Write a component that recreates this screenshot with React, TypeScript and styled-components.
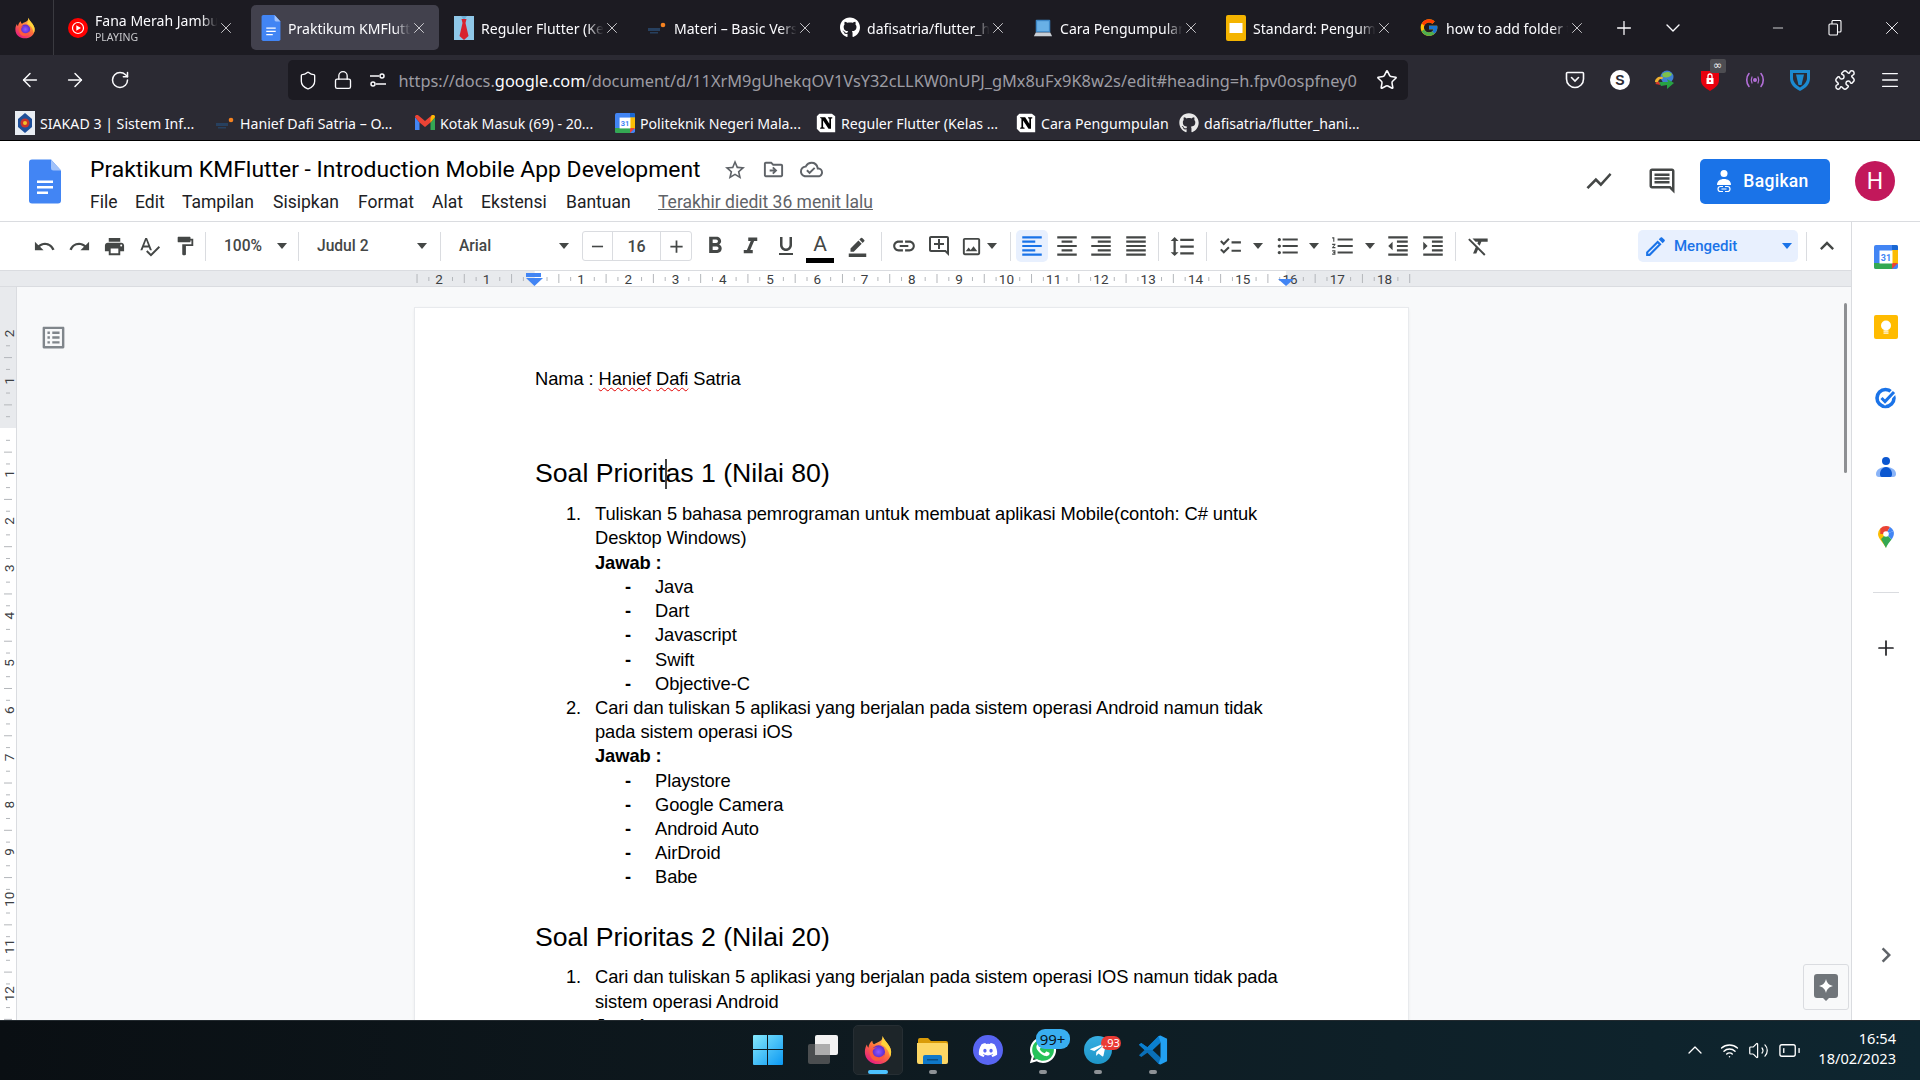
import React from "react";
import styled, { createGlobalStyle } from "styled-components";
import {
  ArrowLeft, ArrowRight, RotateCw, Shield, Lock, Star, Puzzle, Menu, X, Plus, ChevronDown,
  Minus, ChevronUp, Wifi, Volume2, BatteryLow,
} from "lucide-react";
import {
  MdUndo, MdRedo, MdPrint, MdSpellcheck, MdFormatPaint, MdFormatBold, MdFormatItalic, MdFormatUnderlined,
  MdBorderColor, MdLink, MdOutlineAddComment, MdOutlineImage, MdFormatAlignLeft, MdFormatAlignCenter,
  MdFormatAlignRight, MdFormatAlignJustify, MdFormatLineSpacing, MdChecklist, MdFormatListBulleted,
  MdFormatListNumbered, MdFormatIndentDecrease, MdFormatIndentIncrease, MdFormatClear, MdOutlineEdit,
  MdKeyboardArrowUp, MdChevronRight, MdStarBorder, MdOutlineDriveFileMove, MdOutlineCloudDone,
  MdShowChart, MdOutlineComment, MdAdd, MdRemove, MdOutlineListAlt,
} from "react-icons/md";
import { FaGithub, FaDiscord, FaWhatsapp, FaTelegramPlane } from "react-icons/fa";
import { FcGoogle } from "react-icons/fc";

const uiFont = `"Noto Sans", "Open Sans", sans-serif`;
const docsFont = `Roboto, "Liberation Sans", sans-serif`;

const GlobalStyle = createGlobalStyle`
  html, body { margin: 0; padding: 0; background: #fff; overflow: hidden; }
  * { box-sizing: border-box; }
`;

const Root = styled.div`
  width: 1920px; height: 1080px; display: flex; flex-direction: column; overflow: hidden;
  font-family: ${uiFont};
`;

/* ---------- browser chrome ---------- */
const TabStrip = styled.div`
  height: 55px; background: #1c1b22; display: flex; align-items: center; color: #fbfbfe; flex: none;
`;
const FirefoxCell = styled.div`
  width: 54px; height: 55px; border-right: 1px solid #3a3a40; display: flex; align-items: center;
  justify-content: center; margin-right: 4px; padding-right: 3px;
`;
const Tab = styled.div<{ $active?: boolean }>`
  width: 188px; height: 45px; margin-right: 5px; padding-left: 10px; display: flex; align-items: center;
  border-radius: 5px; flex: none; background: ${(p) => (p.$active ? "#42414d" : "transparent")};
`;
const TabIcon = styled.span`
  width: 20px; height: 24px; flex: none; display: flex; align-items: center; justify-content: center;
`;
const TabText = styled.div<{ $single: boolean }>`
  width: 125px; margin-left: 7px; flex: none; overflow: hidden; white-space: nowrap; font-size: 14.05px; line-height: 19px;
  padding-top: ${(p) => (p.$single ? 2 : 0)}px;
  -webkit-mask-image: linear-gradient(90deg, #000 85%, transparent 98%);
  mask-image: linear-gradient(90deg, #000 85%, transparent 98%);
`;
const TabSub = styled.div`
  font-size: 10.5px; line-height: 14px; color: #c8c8cc;
`;
const TabClose = styled.span`
  margin-left: -3px; line-height: 0; color: #e8e8ea; flex: none;
`;
const StripButton = styled.div<{ $w: number }>`
  width: ${(p) => p.$w}px; height: 45px; display: flex; align-items: center; justify-content: center; flex: none;
`;
const WindowControls = styled.div`
  margin-left: auto; display: flex;
`;
const NavBar = styled.div`
  height: 50px; background: #2b2a33; display: flex; align-items: center; padding-left: 7.5px; color: #fbfbfe; flex: none;
`;
const NavButton = styled.div`
  width: 45px; height: 40px; display: flex; align-items: center; justify-content: center; flex: none;
`;
const UrlBox = styled.div`
  width: 1120px; height: 40px; margin-left: 145.5px; background: #1c1b22; border-radius: 5px; display: flex;
  align-items: center; padding-left: 10px; flex: none; color: #fbfbfe;
`;
const UrlIcon = styled.span<{ $w: number }>`
  width: ${(p) => p.$w}px; display: flex; justify-content: center; flex: none;
`;
const UrlText = styled.div`
  margin-left: 10.5px; padding-top: 2px; font-size: 16.35px; color: #9c9ca3; white-space: nowrap; width: 977px; overflow: hidden;
`;
const UrlHost = styled.span`
  color: #fbfbfe;
`;
const ExtRow = styled.div`
  margin-left: 144.5px; display: flex;
`;
const ExtSlot = styled.div`
  width: 45px; height: 40px; display: flex; align-items: center; justify-content: center; position: relative; flex: none;
`;
const InfinityTag = styled.span`
  position: absolute; left: 22px; top: -1px; width: 16px; height: 14px; background: #4d4d52; border-radius: 2px;
  color: #f2f2f2; font: 11px/13px "DejaVu Sans", sans-serif; text-align: center;
`;
const BookmarkBar = styled.div`
  height: 35px; background: #2b2a33; display: flex; align-items: center; padding-left: 15px; color: #fbfbfe; flex: none;
`;
const Bookmark = styled.div<{ $w: number }>`
  width: ${(p) => p.$w}px; display: flex; align-items: center; gap: 5px; font-size: 14.15px; white-space: nowrap; flex: none;
`;
const BookmarkLabel = styled.span`
  padding-top: 2px;
`;
const FavSlot = styled.span`
  width: 20px; height: 22px; display: flex; align-items: center; justify-content: center; flex: none;
`;

/* ---------- docs header ---------- */
const DocsHeader = styled.div`
  height: 82px; background: #fff; border-top: 1px solid #000; border-bottom: 1px solid #dadce0; padding-left: 29px;
  display: flex; flex: none; font-family: ${docsFont};
`;
const LogoCell = styled.div`
  width: 32px; margin-right: 29px; padding-top: 18px; flex: none;
`;
const TitleColumn = styled.div`
  padding-top: 12px;
`;
const TitleRow = styled.div`
  height: 33px; display: flex; align-items: center;
`;
const DocTitle = styled.div`
  font-size: 22.9px; color: #000; white-space: nowrap; width: 626px;
`;
const TitleAction = styled.span<{ $w: number }>`
  width: ${(p) => p.$w}px; display: flex; justify-content: center; color: #5f6368; flex: none;
`;
const MenuRow = styled.div`
  height: 32px; display: flex; align-items: center; font-size: 17.5px; color: #202124; white-space: nowrap;
`;
const MenuItem = styled.span<{ $x: number }>`
  width: ${(p) => p.$x}px; flex: none;
`;
const LastEdit = styled.span`
  color: #5f6368; text-decoration: underline; font-size: 17.5px;
`;
const HeaderRight = styled.div`
  margin-left: auto; display: flex; align-items: center; padding-right: 25px;
`;
const HeaderIcon = styled.div<{ $ml?: number }>`
  width: 45px; height: 45px; margin-left: ${(p) => p.$ml ?? 0}px; display: flex; align-items: center; justify-content: center;
  color: #444746; flex: none;
`;
const ShareButton = styled.div`
  width: 130px; height: 45px; margin-left: 15.5px; padding-right: 7px; background: #1a73e8; border-radius: 5px; color: #fff; display: flex;
  align-items: center; justify-content: center; gap: 9px; font-size: 17.5px; font-weight: 500; letter-spacing: .3px;
`;
const Avatar = styled.div`
  width: 40px; height: 40px; margin-left: 25px; border-radius: 50%; background: #c2185b; color: #fff; font-size: 23px;
  display: flex; align-items: center; justify-content: center;
`;

/* ---------- workspace ---------- */
const Workspace = styled.div`
  flex: 1; display: flex; min-height: 0; font-family: ${docsFont};
`;
const EditorColumn = styled.div`
  flex: 1; min-width: 0; display: flex; flex-direction: column;
`;
const Toolbar = styled.div`
  height: 48px; background: #fff; display: flex; align-items: center; padding: 0 6.5px 0 27px; flex: none; color: #444746;
`;
const ToolButton = styled.div<{ $w?: number; $ml?: number; $on?: boolean }>`
  width: ${(p) => p.$w ?? 35}px; height: 32px; margin-left: ${(p) => p.$ml ?? 0}px; display: flex; align-items: center;
  justify-content: center; flex: none; border-radius: 5px; background: ${(p) => (p.$on ? "#e8f0fe" : "transparent")};
  color: ${(p) => (p.$on ? "#1a73e8" : "#444746")}; position: relative;
`;
const ImageButton = styled.div`
  width: 50px; height: 32px; padding-right: 6px; display: flex; align-items: center; justify-content: center; gap: 3.5px; flex: none; color: #444746;
`;
const ToolSep = styled.div<{ $ml: number; $mr: number }>`
  width: 1px; height: 29px; background: #dadce0; margin: 0 ${(p) => p.$mr}px 0 ${(p) => p.$ml}px; flex: none;
`;
const Caret = styled.span<{ $color?: string }>`
  width: 0; height: 0; flex: none; border-left: 5px solid transparent; border-right: 5px solid transparent;
  border-top: 6px solid ${(p) => p.$color ?? "#444746"};
`;
const Select = styled.div<{ $w: number; $pr: number; $ml?: number }>`
  width: ${(p) => p.$w}px; height: 32px; margin-left: ${(p) => p.$ml ?? 0}px; padding: 0 ${(p) => p.$pr}px 0 15px; display: flex;
  align-items: center; justify-content: space-between; flex: none; font-size: 15.6px; font-weight: 500; color: #444746;
`;
const SizeBox = styled.div`
  width: 110px; height: 30px; margin-left: 4px; border: 1px solid #dadce0; border-radius: 3px; display: grid;
  grid-template-columns: 29px 49px 30px; flex: none; align-items: center; justify-items: center; font-size: 16px; font-weight: 500; color: #444746;
`;
const SizeValue = styled.div`
  width: 100%; height: 100%; border-left: 1px solid #dadce0; border-right: 1px solid #dadce0; display: flex; align-items: center; justify-content: center;
`;
const ColorBar = styled.span`
  position: absolute; left: 3.5px; bottom: -1px; width: 28px; height: 5px; background: #000;
`;
const ModeButton = styled.div`
  width: 160px; height: 32px; margin-left: auto; background: #e8f0fe; border-radius: 5px; display: flex; align-items: center;
  color: #1a73e8; padding: 0 6px 0 5px; font-size: 15px; font-weight: 500; flex: none;
`;
const ModeLabel = styled.span`
  margin-left: 6px; flex: 1;
`;
const RulerBar = styled.div`
  height: 17px; background: #e8eaed; border-top: 1px solid #dadce0; border-bottom: 1px solid #dadce0; flex: none; overflow: hidden;
`;
const RulerSvg = styled.svg`
  display: block;
`;
const EditorBody = styled.div`
  flex: 1; min-height: 0; display: flex; overflow: hidden;
`;
const SideRuler = styled.div`
  width: 17px; background: #fff; border-right: 1px solid #dadce0; flex: none; overflow: hidden;
`;
const Canvas = styled.div`
  flex: 1; min-width: 0; background: #f8f9fa; position: relative; padding: 21px 0 0 398px; overflow: hidden;
`;
const OutlineToggle = styled.div`
  position: absolute; left: 22px; top: 36px; color: #80868b; line-height: 0;
`;
const ScrollThumb = styled.div`
  position: absolute; right: 4px; top: 16px; width: 3px; height: 170px; background: #8e9093; border-radius: 2px;
`;
const ExploreButton = styled.div`
  position: absolute; right: 2px; bottom: 10px; width: 46px; height: 46px; background: #f8f9fa; border: 1px solid #dadce0;
  border-radius: 3px; display: flex; align-items: center; justify-content: center;
`;
const Page = styled.div`
  width: 993px; min-height: 900px; background: #fff; box-shadow: 0 0 0 1px #e8eaed, 0 1px 3px rgba(60,64,67,.15);
  padding: 59px 120px 0; font: 18.33px/24.2px "Liberation Sans", Arial, sans-serif; letter-spacing: -0.085px; color: #000;
`;
const Para = styled.div`
  white-space: pre;
`;
const Squiggle = styled.span`
  text-decoration: underline wavy #e00000 1px; text-underline-offset: 2px;
`;
const Heading = styled.h2<{ $mt: number }>`
  font: 400 26.67px/35.2px "Liberation Sans", Arial, sans-serif; letter-spacing: 0; margin: ${(p) => p.$mt}px 0 10.7px;
`;
const Caretline = styled.span`
  display: inline-block; position: relative; width: 0; height: 0;
`;
const CaretBar = styled.span`
  position: absolute; left: 0; top: -23px; width: 1.5px; height: 30px; background: #444;
`;
const NumRow = styled.div`
  display: flex; padding-left: 31px;
`;
const NumMark = styled.div`
  width: 29px; flex: none;
`;
const NumBody = styled.div`
  flex: 1;
`;
const Bold = styled.div`
  font-weight: 700;
`;
const DashRow = styled.div`
  display: flex; padding-left: 30px;
`;
const DashMark = styled.div`
  width: 30px; flex: none; font-weight: 700;
`;
const SidePanel = styled.div`
  width: 69px; background: #fff; border-left: 1px solid #dadce0; flex: none; display: flex; flex-direction: column; align-items: center;
`;
const SideApp = styled.div`
  height: 70px; width: 100%; display: flex; align-items: center; justify-content: center; flex: none;
`;
const SideDivider = styled.div`
  width: 26px; height: 1px; background: #dadce0; margin: 20px 0 20px; flex: none;
`;
const SideFoot = styled.div`
  margin-top: auto; padding-bottom: 50px; color: #5f6368; line-height: 0;
`;

/* ---------- taskbar ---------- */
const Taskbar = styled.div`
  height: 60px; flex: none; background: linear-gradient(90deg, #0a0f13 0%, #0e1a20 45%, #0e2630 100%);
  border-top: 1px solid #232a2f; display: flex; align-items: center; padding: 0 0 1px 742.5px; color: #fff;
`;
const TaskApps = styled.div`
  display: flex; gap: 5px;
`;
const TaskSlot = styled.div<{ $active?: boolean }>`
  width: 50px; height: 50px; display: flex; align-items: center; justify-content: center; position: relative; border-radius: 5px;
  background: ${(p) => (p.$active ? "#1d2529" : "transparent")};
  border: 1px solid ${(p) => (p.$active ? "#262e33" : "transparent")};
`;
const RunDot = styled.span<{ $active?: boolean }>`
  position: absolute; bottom: 0px; left: 50%; transform: translateX(-50%); height: 4px; border-radius: 2px;
  width: ${(p) => (p.$active ? 20 : 8)}px; background: ${(p) => (p.$active ? "#4cc2ff" : "#8d9296")};
`;
const CountBadge = styled.span<{ $bg: string; $l: number; $t: number; $w: number; $h: number; $fs: number; $c: string }>`
  position: absolute; left: ${(p) => p.$l}px; top: ${(p) => p.$t}px; width: ${(p) => p.$w}px; height: ${(p) => p.$h}px;
  background: ${(p) => p.$bg}; color: ${(p) => p.$c}; border-radius: 9px; font: ${(p) => p.$fs}px/${(p) => p.$h}px ${uiFont};
  text-align: center;
`;
const Tray = styled.div`
  margin-left: auto; display: flex; align-items: center; padding-right: 24px;
`;
const TrayIcon = styled.span<{ $w: number }>`
  width: ${(p) => p.$w}px; display: flex; justify-content: center; flex: none;
`;
const Clock = styled.div`
  margin-left: 11px; padding-bottom: 4px; text-align: right; font-size: 14.6px; line-height: 20px; color: #fff;
`;
const StackedIcon = styled.span`
  position: relative; width: 30px; height: 30px; display: block;
`;
const WaDisc = styled.span`
  position: absolute; left: 3px; top: 3px; width: 24px; height: 24px; border-radius: 50%; background: #25c25a;
`;
const WaGlyph = styled.span`
  position: absolute; left: 0; top: 0; line-height: 0;
`;
const DiscordDisc = styled.span`
  width: 30px; height: 30px; border-radius: 50%; background: #5865f2; display: flex; align-items: center; justify-content: center;
`;
const TelegramDisc = styled.span`
  width: 28px; height: 28px; border-radius: 50%; background: linear-gradient(180deg, #37aee2, #1e96c8); display: flex; align-items: center; justify-content: center;
`;

/* ---------- drawings ---------- */
const Firefox = ({ s = 24, id }: { s?: number; id: string }) => (
  <svg width={s} height={s} viewBox="0 0 32 32">
    <defs>
      <linearGradient id={`${id}A`} x1="0.8" y1="0.1" x2="0.2" y2="1">
        <stop offset="0" stopColor="#ffbd4f" /><stop offset=".45" stopColor="#ff7139" /><stop offset="1" stopColor="#e31587" />
      </linearGradient>
      <radialGradient id={`${id}B`}><stop offset="0" stopColor="#9059ff" /><stop offset="1" stopColor="#592acb" /></radialGradient>
    </defs>
    <path d="M21 1c.6 3 3 5 5.500 8.500C29 13 30 15.500 30 18c0 7.700-6.300 13-14 13S2 25.700 2 18c0-3 .8-5.600 2.200-7.800.2 1.600.8 2.600 1.600 3.400C6 10 8 7 10 6c-.2 1.600.5 3 1.800 3.800C14 8 18 7 19.500 5.500 20.500 4.300 21 2.800 21 1z" fill={`url(#${id}A)`} />
    <path d="M21 1c.6 3 3 5 5.500 8.500C29 13 30 15.500 30 18c0 2-.4 3.800-1.200 5.400C28 17 24 12 19 9.800c1-1.200 2-5.300 2-8.800z" fill="#ffd43a" />
    <circle cx="16.500" cy="18" r="7" fill={`url(#${id}B)`} />
    <path d="M7 17c2-3 5-4 8-3.500-4 .5-5 3-4.500 5.500.5 3 3.500 5 7 4.600 3.500-.4 5-2.400 5.500-4.600 0 5-4 8.500-8.500 8.500S7 23 7 17z" fill="#ff5a3c" />
  </svg>
);
const DocsGlyph = ({ w, h }: { w: number; h: number }) => (
  <svg width={w} height={h} viewBox="0 0 32 44">
    <path d="M3 0h19l10 11v30a3 3 0 0 1-3 3H3a3 3 0 0 1-3-3V3a3 3 0 0 1 3-3z" fill="#4285f4" />
    <path d="M22 0l10 11H24.500a2.500 2.500 0 0 1-2.500-2.500z" fill="#a1c2fa" />
    <path d="M8 21h16v2.400H8zM8 26.500h16v2.400H8zM8 32h11v2.400H8z" fill="#fff" />
  </svg>
);
const YtMusic = () => (
  <svg width="20" height="20" viewBox="0 0 20 20">
    <circle cx="10" cy="10" r="10" fill="#f00" />
    <circle cx="10" cy="10" r="5.500" fill="none" stroke="#fff" strokeWidth="1.200" />
    <path d="M8.300 7.300 13 10l-4.700 2.700z" fill="#fff" />
  </svg>
);
const TieIcon = () => (
  <svg width="20" height="24" viewBox="0 0 20 24">
    <rect width="20" height="24" fill="#6aaed6" />
    <path d="M0 0h7l3 4 3-4h7v24H0z" fill="#8fc7e8" />
    <path d="M7.500 3h5l-1 4 3 13-4.500 4-4.500-4 3-13z" fill="#d8232f" />
  </svg>
);
const OrbitIcon = () => (
  <svg width="20" height="16" viewBox="0 0 20 16">
    <rect x="1" y="8" width="12" height="3" fill="#27405f" />
    <rect x="3" y="12" width="8" height="1.500" fill="#27405f" />
    <circle cx="16" cy="5" r="2.300" fill="#f58220" />
  </svg>
);
const LaptopIcon = () => (
  <svg width="22" height="22" viewBox="0 0 22 22">
    <rect x="3" y="2" width="16" height="14" rx="1" fill="#3d87c7" />
    <rect x="4.500" y="3.500" width="13" height="11" fill="#69b0e6" />
    <path d="M3 16h16l2 4H1z" fill="#c9ced4" />
  </svg>
);
const SlidesIcon = () => (
  <svg width="20" height="26" viewBox="0 0 20 26">
    <rect width="20" height="26" rx="2" fill="#f4b400" />
    <rect x="3.500" y="8" width="13" height="10" fill="#fff" />
  </svg>
);
const GmailIcon = () => (
  <svg width="20" height="16" viewBox="0 0 20 16">
    <path d="M0 2v13h4.500V7.500z" fill="#4285f4" />
    <path d="M20 2v13h-4.500V7.500z" fill="#34a853" />
    <path d="M0 2c0-2 2.200-2.500 3.500-1.500L10 6l6.500-5.500C17.800-.5 20 0 20 2l-4.500 5.500L10 12 4.500 7.500z" fill="#ea4335" />
    <path d="M15.500 3.600 16.500.5C17.800-.5 20 0 20 2l-4.500 5.500z" fill="#fbbc04" />
  </svg>
);
const CalendarIcon = ({ s }: { s: number }) => (
  <svg width={s} height={s} viewBox="0 0 24 24">
    <rect width="24" height="24" rx="2" fill="#4285f4" />
    <rect x="18" y="5" width="6" height="14" fill="#fbbc04" />
    <path d="M0 18h18v6H2a2 2 0 0 1-2-2z" fill="#34a853" />
    <path d="M18 18h6l-6 6z" fill="#ea4335" />
    <path d="M18 0h4a2 2 0 0 1 2 2v3h-6z" fill="#1967d2" />
    <rect x="5.500" y="5.500" width="13" height="13" fill="#fff" />
    <text x="12" y="16" textAnchor="middle" fontSize="9" fontWeight="700" fontFamily="Roboto" fill="#4285f4">31</text>
  </svg>
);
const NotionIcon = () => (
  <svg width="20" height="20" viewBox="0 0 24 24">
    <path d="M4 1h15l4 3v19H5l-4-4V4z" fill="#fff" />
    <path d="M7 5h4l5 8V7l-1.500-.6V5h5v1.400L18 7v12h-3L8.500 9v8l1.800.6V19H5v-1.400l1.500-.6V6.500L5 6V5z" fill="#000" />
  </svg>
);
const SiakadIcon = () => (
  <svg width="20" height="24" viewBox="0 0 20 24">
    <rect width="20" height="24" fill="#e9edf3" />
    <path d="M10 2l7 6v8l-7 6-7-6V8z" fill="#1f4f99" />
    <circle cx="10" cy="12" r="4.500" fill="#c9342c" />
    <circle cx="10" cy="12" r="2" fill="#f0c030" />
  </svg>
);
const PermIcon = () => (
  <svg width="20" height="18" viewBox="0 0 20 18" fill="none" stroke="#fbfbfe" strokeWidth="1.500">
    <circle cx="14" cy="5" r="2" /><path d="M2 5h9" />
    <circle cx="5" cy="13" r="2" /><path d="M8 13h10" />
  </svg>
);
const PocketIcon = () => (
  <svg width="20" height="20" viewBox="0 0 20 20" fill="none" stroke="#fbfbfe" strokeWidth="1.600">
    <path d="M2.500 2.500h15a1 1 0 0 1 1 1V9a8.500 8.500 0 0 1-17 0V3.500a1 1 0 0 1 1-1z" />
    <path d="M6.500 7.500 10 11l3.500-3.500" strokeLinecap="round" />
  </svg>
);
const SkypeS = () => (
  <svg width="20" height="20" viewBox="0 0 20 20">
    <circle cx="10" cy="10" r="10" fill="#fff" />
    <text x="10" y="15" textAnchor="middle" fontSize="14" fontWeight="700" fontFamily="Liberation Sans" fill="#2b2a33">S</text>
  </svg>
);
const IdmIcon = () => (
  <svg width="22" height="22" viewBox="0 0 22 22">
    <circle cx="13" cy="8" r="6.500" fill="#3f7fd0" />
    <path d="M8 5c3-2 7-3 10 0-1 3-5 4-9 3z" fill="#7fc04a" />
    <path d="M1 13c0-4 4-6 7-5 2 .5 1 2-1 2-2 0-3 2-3 4z" fill="#f0b030" />
    <path d="M1.500 15c0-1 2-3 4-2l1 3z" fill="#d8352c" />
    <path d="M5 13h9l-1-3 7 4-7 6v-4l-6 1z" fill="#27a243" />
  </svg>
);
const RedShield = () => (
  <svg width="18" height="22" viewBox="0 0 18 22">
    <path d="M0 2h18v9c0 5-4 8-9 11C4 19 0 16 0 11z" fill="#e8000d" />
    <rect x="5.500" y="9" width="7" height="6" fill="#fff" />
    <path d="M7 9V7a2 2 0 0 1 4 0v2" fill="none" stroke="#fff" strokeWidth="1.300" />
    <rect x="8.300" y="11" width="1.400" height="2" fill="#e8000d" />
  </svg>
);
const RadioIcon = () => (
  <svg width="20" height="16" viewBox="0 0 20 16" fill="none" stroke="#b36fd8" strokeWidth="1.600" strokeLinecap="round">
    <path d="M4 1.500C1 5 1 11 4 14.500M16 1.500c3 3.500 3 9.500 0 13" />
    <path d="M7 5c-1 2-1 4 0 6M13 5c1 2 1 4 0 6" strokeWidth="1.200" />
    <circle cx="10" cy="8" r="1.200" fill="#b36fd8" />
  </svg>
);
const ZenShield = () => (
  <svg width="20" height="22" viewBox="0 0 20 22">
    <path d="M0 1h20v8c0 6-4 10-10 13C4 19 0 15 0 9z" fill="#1c8ad0" />
    <path d="M3 4h14v5c0 4-3 7-7 9.500C6 16 3 13 3 9z" fill="#2b2a33" />
    <path d="M6 5.500h8L11.500 16h-3z" fill="#1c8ad0" />
  </svg>
);
const RestoreIcon = () => (
  <svg width="14" height="16" viewBox="0 0 14 16" fill="none" stroke="#fbfbfe" strokeWidth="1.100">
    <rect x="1" y="4" width="8.500" height="11" rx="1" />
    <path d="M4 4V1.500a1 1 0 0 1 1-1h7a1 1 0 0 1 1 1V11a1 1 0 0 1-1 1H9.500" />
  </svg>
);
const BagikanIcon = () => (
  <svg width="20" height="24" viewBox="0 0 20 24" fill="#fff">
    <circle cx="10" cy="4.500" r="3.500" />
    <path d="M3 16c0-4 3-6 7-6s7 2 7 6z" />
    <path d="M4 20a2.500 2.500 0 0 1 2.500-2.500H9M16 20a2.500 2.500 0 0 0-2.500-2.500H11M4 20a2.500 2.500 0 0 0 2.500 2.500H9M16 20a2.500 2.500 0 0 1-2.500 2.500H11M7.500 20h5" fill="none" stroke="#fff" strokeWidth="1.200" />
  </svg>
);
const KeepIcon = () => (
  <svg width="24" height="24" viewBox="0 0 24 24">
    <rect width="24" height="24" rx="2" fill="#ffbb00" />
    <circle cx="12" cy="10.500" r="5" fill="#fff" />
    <rect x="9.500" y="15.500" width="5" height="1.200" fill="#fff" />
    <rect x="9.500" y="17.500" width="5" height="1.200" fill="#fff" />
  </svg>
);
const TasksIcon = () => (
  <svg width="24" height="24" viewBox="0 0 24 24">
    <circle cx="11.500" cy="13" r="8.500" fill="none" stroke="#1a73e8" strokeWidth="3.600" />
    <path d="M7.500 13l3.500 3.500L21 6" fill="none" stroke="#fff" strokeWidth="6" />
    <path d="M7.500 13l3.500 3.500L20 7" fill="none" stroke="#1a73e8" strokeWidth="3" />
  </svg>
);
const ContactsIcon = () => (
  <svg width="20" height="22" viewBox="0 0 20 22">
    <circle cx="10" cy="5" r="4" fill="#0b57d0" />
    <path d="M0 18c0-4 4-7 10-7s10 3 10 7c0 2-1 3-3 3H3c-2 0-3-1-3-3z" fill="#8ab4f8" />
    <path d="M4 18c0-4 3-7 6-7s6 3 6 7c0 2-.5 3-2 3H6c-1.500 0-2-1-2-3z" fill="#0b57d0" />
  </svg>
);
const MapsIcon = () => (
  <svg width="16" height="22" viewBox="0 0 16 22">
    <path d="M8 22C6 17 0 13 0 8a8 8 0 0 1 2.300-5.600L8 8z" fill="#fbbc04" />
    <path d="M2.300 2.400A8 8 0 0 1 8 0a8 8 0 0 1 4 1L8 8 2.300 8z" fill="#ea4335" />
    <path d="M12 1a8 8 0 0 1 3.500 4L8 8z" fill="#4285f4" />
    <path d="M15.500 5c1 3.500 0 6-2 8.500L8 8z" fill="#4285f4" />
    <path d="M13.500 13.500C11.500 16 9 19 8 22L3 13l5-5z" fill="#34a853" />
    <circle cx="8" cy="8" r="2.800" fill="#fff" />
  </svg>
);
const ExploreGlyph = () => (
  <svg width="24" height="27" viewBox="0 0 24 27">
    <path d="M3 0h18a3 3 0 0 1 3 3v18a3 3 0 0 1-3 3h-6l-3 3-3-3H3a3 3 0 0 1-3-3V3a3 3 0 0 1 3-3z" fill="#70757a" />
    <path d="M12 5c1 4 3 6 7 7-4 1-6 3-7 7-1-4-3-6-7-7 4-1 6-3 7-7z" fill="#fff" />
  </svg>
);
const WindowsLogo = () => (
  <svg width="30" height="30" viewBox="0 0 30 30">
    <defs>
      <linearGradient id="win" x1="0" y1="0" x2="1" y2="1"><stop offset="0" stopColor="#86e9fd" /><stop offset="1" stopColor="#0b98f2" /></linearGradient>
    </defs>
    <path d="M0 1a1 1 0 0 1 1-1h13v14H0zM15 0h14a1 1 0 0 1 1 1v13H15zM0 15h14v15H1a1 1 0 0 1-1-1zM15 15h15v14a1 1 0 0 1-1 1H15z" fill="url(#win)" />
  </svg>
);
const TaskView = () => (
  <svg width="30" height="30" viewBox="0 0 30 30">
    <rect x="0" y="9" width="22" height="20" rx="2" fill="#4b4e50" />
    <rect x="7" y="0" width="23" height="20" rx="2" fill="#f2f2f2" />
    <rect x="7" y="9" width="15" height="11" fill="#adadad" />
  </svg>
);
const FilesIcon = () => (
  <svg width="31" height="28" viewBox="0 0 31 28">
    <path d="M1 4a2 2 0 0 1 2-2h8l3 3h15a2 2 0 0 1 2 2v4H1z" fill="#d99b08" />
    <path d="M0 7h29a2 2 0 0 1 2 2v17a2 2 0 0 1-2 2H2a2 2 0 0 1-2-2z" fill="#fcd664" />
    <path d="M6 28V21a2 2 0 0 1 2-2h15a2 2 0 0 1 2 2v7z" fill="#0f78c9" />
    <rect x="10" y="23" width="11" height="1.500" fill="#0a4f85" />
  </svg>
);
const VsCode = () => (
  <svg width="30" height="32" viewBox="0 0 32 32">
    <path d="M1 10.500 3.500 8.500 10 13 22 1 24 1V8L15.500 16 24 24V31H22L10 19 3.500 23.500 1 21.500 7 16Z" fill="#0a6fb8" />
    <path d="M22 1 10 13 3.500 8.500 1 10.500 7 16 15.500 16 24 8V1z" fill="#0a7fd0" />
    <path d="M24 .5 31 4V28L24 31.500 22 31 24 24V8L22 1Z" fill="#22a0f2" />
  </svg>
);

/* ---------- rulers ---------- */
const CM = 47.27;
const ZERO_X = 534.7;
const ZERO_Y = 141;
const quarter = [0.25, 0.5, 0.75];

const HorizontalRuler = () => {
  const marks: React.ReactNode[] = [];
  for (let i = -3; i <= 18; i++) {
    const base = ZERO_X + i * CM;
    if (i !== 0 && i >= -2) {
      marks.push(
        <text key={`n${i}`} x={base - 1} y={13} textAnchor="middle" fontSize="13.5" fontFamily="Roboto" fill="#3c4043">
          {Math.abs(i)}
        </text>,
      );
    }
    quarter.forEach((q) => {
      const x = base + q * CM;
      if (x < 414 || x > 1410) return;
      const long = q === 0.5;
      marks.push(<rect key={`t${i}${q}`} x={x} y={long ? 3 : 6} width="1" height={long ? 9 : 4} fill="#b4b7bb" />);
    });
  }
  return (
    <RulerSvg width="1851" height="15" viewBox="0 0 1851 15">
      <rect x="534.7" width="751.300" height="15" fill="#fff" />
      {marks}
      <rect x="526" y="2" width="15" height="4" fill="#4285f4" />
      <path d="M526 7h17l-8.500 8z" fill="#4285f4" />
      <path d="M1278 8h16l-8 7z" fill="#4285f4" />
    </RulerSvg>
  );
};

const VerticalRuler = () => {
  const marks: React.ReactNode[] = [];
  for (let i = -2; i <= 15; i++) {
    const base = ZERO_Y + i * CM;
    if (i !== 0) {
      marks.push(
        <text key={`n${i}`} transform={`translate(13.500 ${base - (i > 0 ? 1.5 : 0)}) rotate(-90)`} textAnchor="middle" fontSize="13.5" fontFamily="Roboto" fill="#3c4043">
          {Math.abs(i)}
        </text>,
      );
    }
    quarter.forEach((q) => {
      const y = base + q * CM;
      const long = q === 0.5;
      marks.push(<rect key={`t${i}${q}`} x={long ? 4 : 6} y={y} width={long ? 8 : 4} height="1" fill="#b4b7bb" />);
    });
  }
  return (
    <RulerSvg width="16" height="733" viewBox="0 0 16 733">
      <rect width="16" height="141" fill="#e8eaed" />
      {marks}
    </RulerSvg>
  );
};

/* ---------- data ---------- */
const tabs: { icon: React.ReactNode; title: string; sub?: string; active?: boolean }[] = [
  { icon: <YtMusic />, title: "Fana Merah Jambu", sub: "PLAYING" },
  { icon: <DocsGlyph w={20} h={26} />, title: "Praktikum KMFlutter", active: true },
  { icon: <TieIcon />, title: "Reguler Flutter (Kelas" },
  { icon: <OrbitIcon />, title: "Materi – Basic Version" },
  { icon: <FaGithub size={21} color="#fff" />, title: "dafisatria/flutter_hanief" },
  { icon: <LaptopIcon />, title: "Cara Pengumpulan" },
  { icon: <SlidesIcon />, title: "Standard: Pengumpulan" },
  { icon: <FcGoogle size={21} />, title: "how to add folder to" },
];

const bookmarks: { icon: React.ReactNode; label: string; w: number }[] = [
  { icon: <SiakadIcon />, label: "SIAKAD 3 | Sistem Inf...", w: 200 },
  { icon: <OrbitIcon />, label: "Hanief Dafi Satria – O...", w: 200 },
  { icon: <GmailIcon />, label: "Kotak Masuk (69) - 20...", w: 200 },
  { icon: <CalendarIcon s={20} />, label: "Politeknik Negeri Mala...", w: 201 },
  { icon: <NotionIcon />, label: "Reguler Flutter (Kelas ...", w: 200 },
  { icon: <NotionIcon />, label: "Cara Pengumpulan", w: 163 },
  { icon: <FaGithub size={20} color="#e8e8e8" />, label: "dafisatria/flutter_hani...", w: 200 },
];

const menus: [string, number][] = [
  ["File", 45], ["Edit", 47], ["Tampilan", 91], ["Sisipkan", 85], ["Format", 74], ["Alat", 49], ["Ekstensi", 85], ["Bantuan", 92],
];

const extensions = [<PocketIcon key="p" />, <SkypeS key="s" />, <IdmIcon key="i" />, <RedShield key="r" />, <RadioIcon key="a" />, <ZenShield key="z" />];

const prioritas1 = [
  {
    q: "Tuliskan 5 bahasa pemrograman untuk membuat aplikasi Mobile(contoh: C# untuk Desktop Windows)",
    a: ["Java", "Dart", "Javascript", "Swift", "Objective-C"],
  },
  {
    q: "Cari dan tuliskan 5 aplikasi yang berjalan pada sistem operasi Android namun tidak pada sistem operasi iOS",
    a: ["Playstore", "Google Camera", "Android Auto", "AirDroid", "Babe"],
  },
];

const App = () => (
  <Root>
    <GlobalStyle />
    <TabStrip>
      <FirefoxCell><Firefox s={22} id="ffTop" /></FirefoxCell>
      {tabs.map((t) => (
        <Tab key={t.title} $active={t.active}>
          <TabIcon>{t.icon}</TabIcon>
          <TabText $single={!t.sub}>
            {t.title}
            {t.sub && <TabSub>{t.sub}</TabSub>}
          </TabText>
          <TabClose><X size={18} strokeWidth={1.1} /></TabClose>
        </Tab>
      ))}
      <StripButton $w={44}><Plus size={22} strokeWidth={1.4} /></StripButton>
      <StripButton $w={54}><ChevronDown size={24} strokeWidth={1.4} /></StripButton>
      <WindowControls>
        <StripButton $w={57}><Minus size={16} strokeWidth={1.2} /></StripButton>
        <StripButton $w={57}><RestoreIcon /></StripButton>
        <StripButton $w={57}><X size={22} strokeWidth={1} /></StripButton>
      </WindowControls>
    </TabStrip>
    <NavBar>
      <NavButton><ArrowLeft size={22} strokeWidth={1.6} /></NavButton>
      <NavButton><ArrowRight size={22} strokeWidth={1.6} /></NavButton>
      <NavButton><RotateCw size={20} strokeWidth={1.8} /></NavButton>
      <UrlBox>
        <UrlIcon $w={20}><Shield size={21} strokeWidth={1.6} /></UrlIcon>
        <UrlIcon $w={50}><Lock size={20} strokeWidth={1.6} /></UrlIcon>
        <UrlIcon $w={20}><PermIcon /></UrlIcon>
        <UrlText>
          https://docs.<UrlHost>google.com</UrlHost>/document/d/11XrM9gUhekqOV1VsY32cLLKW0nUPJ_gMx8uFx9K8w2s/edit#heading=h.fpv0ospfney0
        </UrlText>
        <Star size={22} strokeWidth={1.7} />
      </UrlBox>
      <ExtRow>
        {extensions.map((e, i) => (
          <ExtSlot key={i}>
            {e}
            {i === 3 && <InfinityTag>∞</InfinityTag>}
          </ExtSlot>
        ))}
        <ExtSlot><Puzzle size={22} strokeWidth={1.6} /></ExtSlot>
        <ExtSlot><Menu size={22} strokeWidth={1.5} /></ExtSlot>
      </ExtRow>
    </NavBar>
    <BookmarkBar>
      {bookmarks.map((b) => (
        <Bookmark key={b.label} $w={b.w}>
          <FavSlot>{b.icon}</FavSlot>
          <BookmarkLabel>{b.label}</BookmarkLabel>
        </Bookmark>
      ))}
    </BookmarkBar>

    <DocsHeader>
      <LogoCell><DocsGlyph w={32} h={45} /></LogoCell>
      <TitleColumn>
        <TitleRow>
          <DocTitle>Praktikum KMFlutter - Introduction Mobile App Development</DocTitle>
          <TitleAction $w={38}><MdStarBorder size={24} /></TitleAction>
          <TitleAction $w={38}><MdOutlineDriveFileMove size={23} /></TitleAction>
          <TitleAction $w={38}><MdOutlineCloudDone size={23} /></TitleAction>
        </TitleRow>
        <MenuRow>
          {menus.map(([m, w]) => <MenuItem key={m} $x={w}>{m}</MenuItem>)}
          <LastEdit>Terakhir diedit 36 menit lalu</LastEdit>
        </MenuRow>
      </TitleColumn>
      <HeaderRight>
        <HeaderIcon><MdShowChart size={30} /></HeaderIcon>
        <HeaderIcon $ml={18}><MdOutlineComment size={30} /></HeaderIcon>
        <ShareButton><BagikanIcon />Bagikan</ShareButton>
        <Avatar>H</Avatar>
      </HeaderRight>
    </DocsHeader>

    <Workspace>
      <EditorColumn>
        <Toolbar>
          <ToolButton><MdUndo size={23} /></ToolButton>
          <ToolButton><MdRedo size={23} /></ToolButton>
          <ToolButton><MdPrint size={23} /></ToolButton>
          <ToolButton><MdSpellcheck size={23} /></ToolButton>
          <ToolButton><MdFormatPaint size={22} /></ToolButton>
          <ToolSep $ml={3} $mr={3} />
          <Select $w={85} $pr={7}>100%<Caret /></Select>
          <ToolSep $ml={4} $mr={3} />
          <Select $w={134} $pr={9}>Judul 2<Caret /></Select>
          <ToolSep $ml={4} $mr={3} />
          <Select $w={134} $pr={9}>Arial<Caret /></Select>
          <SizeBox>
            <MdRemove size={19} />
            <SizeValue>16</SizeValue>
            <MdAdd size={21} />
          </SizeBox>
          <ToolButton $w={35.4} $ml={5.5}><MdFormatBold size={28} /></ToolButton>
          <ToolButton $w={35.4}><MdFormatItalic size={27} /></ToolButton>
          <ToolButton $w={34.6}><MdFormatUnderlined size={24} /></ToolButton>
          <ToolButton $w={34.6}>
            <svg width="22" height="24" viewBox="0 0 22 24">
              <text x="11" y="17" textAnchor="middle" fontSize="21" fontFamily="Roboto" fill="#444746">A</text>
            </svg>
            <ColorBar />
          </ToolButton>
          <ToolButton $w={35.4} $ml={2}><MdBorderColor size={21} /></ToolButton>
          <ToolSep $ml={6.6} $mr={4} />
          <ToolButton><MdLink size={26} /></ToolButton>
          <ToolButton><MdOutlineAddComment size={24} /></ToolButton>
          <ImageButton>
            <MdOutlineImage size={23} />
            <Caret />
          </ImageButton>
          <ToolSep $ml={3.5} $mr={5} />
          <ToolButton $w={32} $on><MdFormatAlignLeft size={26} /></ToolButton>
          <ToolButton $w={34.5} $ml={1.7}><MdFormatAlignCenter size={26} /></ToolButton>
          <ToolButton $w={34.5}><MdFormatAlignRight size={26} /></ToolButton>
          <ToolButton $w={34.5}><MdFormatAlignJustify size={26} /></ToolButton>
          <ToolSep $ml={5} $mr={0} />
          <ToolButton $w={47}><MdFormatLineSpacing size={27} /></ToolButton>
          <ToolSep $ml={0} $mr={5.5} />
          <ToolButton><MdChecklist size={25} /></ToolButton>
          <ToolButton $w={21}><Caret /></ToolButton>
          <ToolButton $ml={2}><MdFormatListBulleted size={26} /></ToolButton>
          <ToolButton $w={16}><Caret /></ToolButton>
          <ToolButton $ml={4}><MdFormatListNumbered size={26} /></ToolButton>
          <ToolButton $w={19}><Caret /></ToolButton>
          <ToolButton $ml={1}><MdFormatIndentDecrease size={26} /></ToolButton>
          <ToolButton><MdFormatIndentIncrease size={26} /></ToolButton>
          <ToolSep $ml={4.5} $mr={5.5} />
          <ToolButton><MdFormatClear size={26} /></ToolButton>
          <ModeButton>
            <MdOutlineEdit size={25} />
            <ModeLabel>Mengedit</ModeLabel>
            <Caret $color="#1a73e8" />
          </ModeButton>
          <ToolSep $ml={8} $mr={2.5} />
          <ToolButton><MdKeyboardArrowUp size={28} /></ToolButton>
        </Toolbar>
        <RulerBar><HorizontalRuler /></RulerBar>
        <EditorBody>
          <SideRuler><VerticalRuler /></SideRuler>
          <Canvas>
            <Page>
              <Para>Nama : <Squiggle>Hanief</Squiggle> <Squiggle>Dafi</Squiggle> Satria</Para>
              <Heading $mt={65.2}>Soal Priorit<Caretline><CaretBar /></Caretline>as 1 (Nilai 80)</Heading>
              {prioritas1.map((p, i) => (
                <NumRow key={p.q}>
                  <NumMark>{i + 1}.</NumMark>
                  <NumBody>
                    {p.q}
                    <Bold>Jawab :</Bold>
                    {p.a.map((ans) => (
                      <DashRow key={ans}>
                        <DashMark>-</DashMark>
                        {ans}
                      </DashRow>
                    ))}
                  </NumBody>
                </NumRow>
              ))}
              <Heading $mt={30}>Soal Prioritas 2 (Nilai 20)</Heading>
              <NumRow>
                <NumMark>1.</NumMark>
                <NumBody>
                  Cari dan tuliskan 5 aplikasi yang berjalan pada sistem operasi IOS namun tidak pada sistem operasi Android
                  <Bold>Jawab :</Bold>
                </NumBody>
              </NumRow>
            </Page>
            <OutlineToggle><MdOutlineListAlt size={29} /></OutlineToggle>
            <ScrollThumb />
            <ExploreButton><ExploreGlyph /></ExploreButton>
          </Canvas>
        </EditorBody>
      </EditorColumn>
      <SidePanel>
        <SideApp><CalendarIcon s={24} /></SideApp>
        <SideApp><KeepIcon /></SideApp>
        <SideApp><TasksIcon /></SideApp>
        <SideApp><ContactsIcon /></SideApp>
        <SideApp><MapsIcon /></SideApp>
        <SideDivider />
        <SideApp><Plus size={24} color="#202124" strokeWidth={1.7} /></SideApp>
        <SideFoot><MdChevronRight size={30} /></SideFoot>
      </SidePanel>
    </Workspace>

    <Taskbar>
      <TaskApps>
        <TaskSlot><WindowsLogo /></TaskSlot>
        <TaskSlot><TaskView /></TaskSlot>
        <TaskSlot $active><Firefox s={30} id="ffTask" /><RunDot $active /></TaskSlot>
        <TaskSlot><FilesIcon /><RunDot /></TaskSlot>
        <TaskSlot><DiscordDisc><FaDiscord size={20} color="#fff" /></DiscordDisc></TaskSlot>
        <TaskSlot>
          <StackedIcon>
            <WaDisc />
            <WaGlyph><FaWhatsapp size={30} color="#fff" /></WaGlyph>
          </StackedIcon>
          <CountBadge $bg="#39aef0" $c="#08131a" $l={17} $t={3} $w={34} $h={20} $fs={15}>99+</CountBadge>
          <RunDot />
        </TaskSlot>
        <TaskSlot>
          <TelegramDisc><FaTelegramPlane size={18} color="#fff" /></TelegramDisc>
          <CountBadge $bg="#ea3b35" $c="#fff" $l={27} $t={10} $w={20} $h={14} $fs={11}>..93</CountBadge>
          <RunDot />
        </TaskSlot>
        <TaskSlot><VsCode /><RunDot /></TaskSlot>
      </TaskApps>
      <Tray>
        <TrayIcon $w={35}><ChevronUp size={24} strokeWidth={1.3} /></TrayIcon>
        <TrayIcon $w={33.6}><Wifi size={19} strokeWidth={1.8} /></TrayIcon>
        <TrayIcon $w={25.2}><Volume2 size={21} strokeWidth={1.4} /></TrayIcon>
        <TrayIcon $w={36}><BatteryLow size={23} strokeWidth={1.4} /></TrayIcon>
        <Clock>16:54<br />18/02/2023</Clock>
      </Tray>
    </Taskbar>
  </Root>
);

export default App;
